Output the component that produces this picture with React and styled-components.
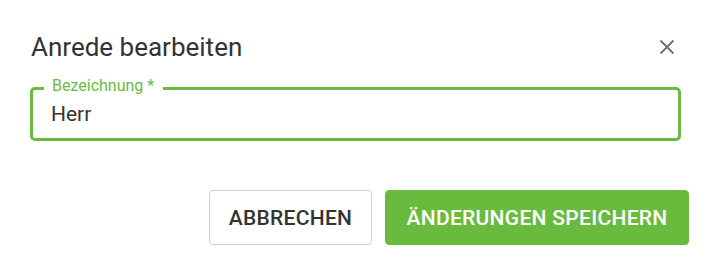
import React from "react";
import styled, { createGlobalStyle } from "styled-components";

const GlobalStyle = createGlobalStyle`
  html, body { margin: 0; padding: 0; background: #fff; }
  body { font-family: Roboto, "Liberation Sans", Arial, sans-serif; }
`;

const GREEN = "#69bb3e";

const Dialog = styled.div`
  width: 711px;
  height: 269px;
  box-sizing: border-box;
  background: #fff;
  display: flex;
  flex-direction: column;
  padding: 27px 22px 0 30px;
`;

const Header = styled.div`
  display: flex;
  align-items: center;
  justify-content: space-between;
  padding-right: 10px;
  height: 40px;
`;

const Title = styled.h2`
  margin: 0 0 0 1px;
  font-size: 26px;
  line-height: 40px;
  font-weight: 400;
  color: #333;
`;

const CloseButton = styled.button`
  border: 0;
  background: none;
  padding: 0;
  width: 24px;
  height: 24px;
  display: flex;
  align-items: center;
  justify-content: center;
  color: #707070;
  cursor: pointer;
`;

const Field = styled.div`
  position: relative;
  margin: 20px 8px 0 0;
  height: 54px;
  box-sizing: border-box;
  border: 3px solid ${GREEN};
  border-radius: 5px;
  display: flex;
  align-items: center;
  padding: 0 18px;
`;

const Label = styled.label`
  position: absolute;
  top: -14px;
  left: 11px;
  padding: 0 9px 0 8px;
  background: #fff;
  font-size: 16px;
  line-height: 20px;
  color: ${GREEN};
`;

const Input = styled.input`
  border: 0;
  outline: none;
  width: 100%;
  font-family: inherit;
  font-size: 21px;
  color: #333;
  padding: 0;
  background: transparent;
`;

const Footer = styled.div`
  display: flex;
  justify-content: flex-end;
  gap: 13px;
  margin-top: 49px;
`;

const Button = styled.button`
  height: 55px;
  padding: 0 ${(p) => (p.$primary ? "18px" : "13px")};
  min-width: ${(p) => (p.$primary ? "304px" : "163px")};
  box-sizing: border-box;
  border-radius: 4px;
  border: 1px solid ${(p) => (p.$primary ? GREEN : "#cfcfcf")};
  background: ${(p) => (p.$primary ? GREEN : "#fff")};
  color: ${(p) => (p.$primary ? "#fff" : "#333")};
  font-family: inherit;
  font-size: 21px;
  font-weight: 500;
  letter-spacing: 0.3px;
  text-transform: uppercase;
  cursor: pointer;
`;

export default function App() {
  return (
    <>
      <GlobalStyle />
      <Dialog>
        <Header>
          <Title>Anrede bearbeiten</Title>
          <CloseButton aria-label="Schließen">
            <svg width="16" height="16" viewBox="0 0 16 16" fill="none" stroke="currentColor" strokeWidth="1.8">
              <path d="M1.5 1.5 L14.5 14.5 M14.5 1.5 L1.5 14.5" />
            </svg>
          </CloseButton>
        </Header>
        <Field>
          <Label>Bezeichnung *</Label>
          <Input defaultValue="Herr" />
        </Field>
        <Footer>
          <Button>Abbrechen</Button>
          <Button $primary>Änderungen speichern</Button>
        </Footer>
      </Dialog>
    </>
  );
}
